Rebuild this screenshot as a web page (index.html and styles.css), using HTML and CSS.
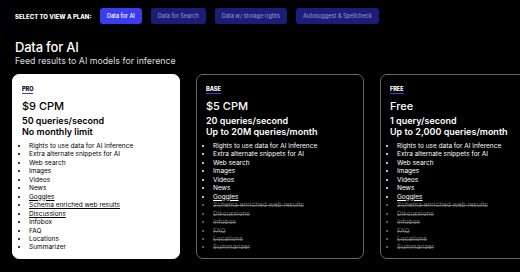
FILE: index.html
```html
<!DOCTYPE html>
<html lang="en">
  <head>
    <meta charset="UTF-8" />
    <meta name="viewport" content="width=device-width, initial-scale=1.0" />
    <title>Plans</title>
    <link rel="stylesheet" href="styles.css">
  </head>
  <body>
    <div class="topbar">
      <span class="select-label">SELECT TO VIEW A PLAN:</span>
      <button class="tab active">Data for AI</button>
      <button class="tab">Data for Search</button>
      <button class="tab">Data w/ storage rights</button>
      <button class="tab">Autosuggest &amp; Spellcheck</button>
    </div>

    <h1>Data for AI</h1>
    <p class="subtitle">Feed results to AI models for inference</p>

    <div class="plans">
      <div class="card pro">
        <span class="tier">PRO</span>
        <div class="price">$9 CPM</div>
        <div class="limits">50 queries/second<br />No monthly limit</div>
        <ul>
          <li>Rights to use data for AI inference</li>
          <li>Extra alternate snippets for AI</li>
          <li>Web search</li>
          <li>Images</li>
          <li>Videos</li>
          <li>News</li>
          <li><u>Goggles</u></li>
          <li><u>Schema enriched web results</u></li>
          <li><u>Discussions</u></li>
          <li>Infobox</li>
          <li>FAQ</li>
          <li>Locations</li>
          <li>Summarizer</li>
        </ul>
      </div>

      <div class="card">
        <span class="tier">BASE</span>
        <div class="price">$5 CPM</div>
        <div class="limits">20 queries/second<br />Up to 20M queries/month</div>
        <ul>
          <li>Rights to use data for AI inference</li>
          <li>Extra alternate snippets for AI</li>
          <li>Web search</li>
          <li>Images</li>
          <li>Videos</li>
          <li>News</li>
          <li><u>Goggles</u></li>
          <li class="off">Schema enriched web results</li>
          <li class="off">Discussions</li>
          <li class="off">Infobox</li>
          <li class="off">FAQ</li>
          <li class="off">Locations</li>
          <li class="off">Summarizer</li>
        </ul>
      </div>

      <div class="card">
        <span class="tier">FREE</span>
        <div class="price">Free</div>
        <div class="limits">1 query/second<br />Up to 2,000 queries/month</div>
        <ul>
          <li>Rights to use data for AI inference</li>
          <li>Extra alternate snippets for AI</li>
          <li>Web search</li>
          <li>Images</li>
          <li>Videos</li>
          <li>News</li>
          <li><u>Goggles</u></li>
          <li class="off">Schema enriched web results</li>
          <li class="off">Discussions</li>
          <li class="off">Infobox</li>
          <li class="off">FAQ</li>
          <li class="off">Locations</li>
          <li class="off">Summarizer</li>
        </ul>
      </div>
    </div>
  </body>
</html>
```

FILE: styles.css
```css
body {
  margin: 0;
  background: #000;
  color: #fff;
  font-family: Inter, Arial, sans-serif;
  overflow: hidden;
}

/* Selector de planes */
.topbar {
  display: flex;
  align-items: center;
  gap: 9px;
  padding: 8px 15px 0;
}
.select-label {
  width: 76px;
  font-size: 6px;
  font-weight: 800;
  white-space: nowrap;
}
.tab {
  height: 16px;
  padding: 0 7px;
  border: none;
  border-radius: 3px;
  background: #1d1d78;
  color: #8c8cc4;
  font-family: inherit;
  font-size: 5.5px;
  font-weight: 500;
}
.tab.active {
  background: #3c3cef;
  color: #fff;
}

h1 {
  margin: 15px 15px 0;
  font-size: 13px;
  font-weight: 500;
  letter-spacing: -0.2px;
  line-height: 16px;
}
.subtitle {
  margin: 0 15px;
  font-size: 8.8px;
  line-height: 12px;
  color: #ddd;
}

/* Tarjetas */
.plans {
  display: flex;
  gap: 16px;
  margin-top: 7px;
  padding-left: 12px;
}
.card {
  flex: 0 0 168px;
  box-sizing: border-box;
  height: 185px;
  padding: 11px 9px 7px;
  border: 1px solid #666;
  border-radius: 7px;
}
.card.pro {
  background: #fff;
  color: #000;
  border-color: #fff;
}
.tier {
  display: block;
  width: fit-content;
  font-size: 5.5px;
  line-height: 7px;
  font-weight: 800;
  border-bottom: 1px solid #3c3cef;
}
.price {
  margin-top: 5px;
  font-size: 11px;
  font-weight: 500;
  line-height: 15px;
}
.limits {
  margin-top: 1px;
  font-size: 9px;
  font-weight: 600;
  line-height: 11px;
}
.card ul {
  margin: 5px 0 0;
  padding-left: 7px;
  font-size: 6.5px;
  line-height: 8.45px;
}
.card li.off {
  color: #777;
  text-decoration: line-through;
}
```
